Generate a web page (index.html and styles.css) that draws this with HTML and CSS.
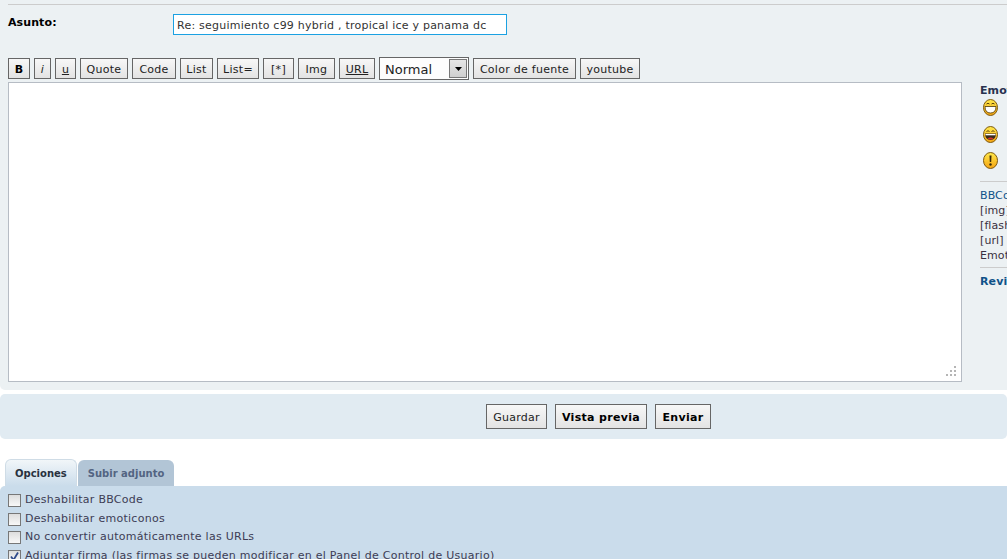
FILE: index.html
```html
<!DOCTYPE html>
<html lang="es">
<head>
<meta charset="utf-8">
<title>Responder</title>
<link rel="stylesheet" href="styles.css">
</head>
<body>
<div class="page">
  <section class="post-panel">
    <hr class="rule">
    <div class="subject-row">
      <label class="subject-label">Asunto:</label>
      <div class="subject-input">Re: seguimiento c99 hybrid , tropical ice y panama dc</div>
    </div>
    <div class="toolbar">
      <span class="btn btn-b">B</span>
      <span class="btn btn-i">i</span>
      <span class="btn btn-u">u</span>
      <span class="btn btn-quote">Quote</span>
      <span class="btn btn-code">Code</span>
      <span class="btn btn-list">List</span>
      <span class="btn btn-listeq">List=</span>
      <span class="btn btn-star">[*]</span>
      <span class="btn btn-img">Img</span>
      <span class="btn btn-url">URL</span>
      <span class="select"><span class="select-text">Normal</span><span class="select-arrow"><svg width="7" height="4" viewBox="0 0 7 4"><path d="M0 0h7L3.5 4z" fill="#000"/></svg></span></span>
      <span class="btn btn-color">Color de fuente</span>
      <span class="btn btn-yt">youtube</span>
    </div>
    <div class="editor-row">
      <div class="editor">
        <svg class="grip" width="11" height="11" viewBox="0 0 11 11"><path d="M8 0h2v2H8zM4 4h2v2H4zM8 4h2v2H8zM0 8h2v2H0zM4 8h2v2H4zM8 8h2v2H8z" fill="#b5b5b5"/></svg>
      </div>
      <aside class="side">
        <div class="side-title">Emoticonos</div>
        <div class="smilies">
          <svg class="smiley" width="17" height="17" viewBox="0 0 17 17"><defs><linearGradient id="face" x1="0" y1="0" x2="0" y2="1"><stop offset="0" stop-color="#ffe94a"/><stop offset="1" stop-color="#f5a412"/></linearGradient></defs><ellipse cx="8.500" cy="8.500" rx="7" ry="8" fill="url(#face)" stroke="#7d5a12"/><path d="M4.500 5q1.500-1.500 3 0M9.500 5q1.500-1.500 3 0" fill="none" stroke="#5c4208"/><path d="M3 7.500h11q0 6.500-5.500 6.500T3 7.500z" fill="#fff" stroke="#4a3608" stroke-width=".8"/></svg>
          <svg class="smiley" width="17" height="17" viewBox="0 0 17 17"><ellipse cx="8.500" cy="8.500" rx="7" ry="8" fill="url(#face)" stroke="#7d5a12"/><path d="M4.500 5.500q1.500-1.500 3 0M9.500 5.500q1.500-1.500 3 0" fill="none" stroke="#5c4208"/><path d="M3 7.500h11q0 6.500-5.500 6.500T3 7.500z" fill="#3a2a1a"/><path d="M3.500 8h10v1.300h-10z" fill="#fff"/><path d="M5.500 12.500q3-2 6 0q-3 2-6 0z" fill="#d8342a"/></svg>
          <svg class="smiley" width="17" height="17" viewBox="0 0 17 17"><ellipse cx="8.500" cy="8.500" rx="7" ry="8" fill="url(#face)" stroke="#7d5a12"/><path d="M7.500 3.500h2l-.3 6.500h-1.400z" fill="#3a2a08"/><circle cx="8.500" cy="12.500" r="1.200" fill="#3a2a08"/></svg>
        </div>
        <hr class="side-rule">
        <div class="side-link">BBCode</div>
        <div class="side-line">[img]</div>
        <div class="side-line">[flash]</div>
        <div class="side-line">[url]</div>
        <div class="side-line">Emot</div>
        <hr class="side-rule side-rule-2">
        <div class="side-review">Revi</div>
      </aside>
    </div>
  </section>
  <section class="actions">
    <span class="btn action action-save">Guardar</span>
    <span class="btn action action-preview strong">Vista previa</span>
    <span class="btn action action-send strong">Enviar</span>
  </section>
  <nav class="tabs">
    <span class="tab active">Opciones</span>
    <span class="tab">Subir adjunto</span>
  </nav>
  <section class="options">
    <div class="option"><span class="check"></span>Deshabilitar BBCode</div>
    <div class="option"><span class="check"></span>Deshabilitar emoticonos</div>
    <div class="option"><span class="check"></span>No convertir automáticamente las URLs</div>
    <div class="option"><span class="check"><svg width="11" height="11" viewBox="0 0 11 11"><path d="M2 5.500l2.500 3.500L9 1.500" fill="none" stroke="#2f4a8a" stroke-width="1.800"/></svg></span>Adjuntar firma (las firmas se pueden modificar en el Panel de Control de Usuario)</div>
  </section>
</div>
</body>
</html>
```
FILE: styles.css
```css
html, body {
  margin: 0;
  padding: 0;
  background: #fff;
}
.page {
  width: 1007px;
  height: 559px;
  overflow: hidden;
  font-family: "DejaVu Sans", Verdana, sans-serif;
  font-size: 11px;
  letter-spacing: 0.27px;
  color: #333;
}
.post-panel {
  height: 390px;
  box-sizing: border-box;
  background: #ecf1f3;
  padding: 4px 0 0 8px;
  border-radius: 0 0 0 5px;
}
.rule {
  margin: 0;
  border: 0;
  height: 1px;
  background: #ccc;
}
.subject-row {
  display: flex;
  margin-top: 9px;
  height: 21px;
  margin-bottom: 23px;
}
.subject-label {
  width: 165px;
  font-weight: bold;
  color: #000;
  padding-top: 2px;
  letter-spacing: 0.1px;
}
.subject-input {
  width: 334px;
  height: 21px;
  box-sizing: border-box;
  border: 1px solid #1ba1e2;
  background: #fff;
  padding: 0 3px;
  line-height: 21px;
  font-size: 11px;
  letter-spacing: 0.23px;
  color: #333;
}
.toolbar {
  display: flex;
  align-items: flex-start;
  gap: 4px;
  height: 24px;
}
.btn {
  display: flex;
  align-items: center;
  justify-content: center;
  box-sizing: border-box;
  height: 21px;
  padding-top: 1px;
  border: 1px solid #666;
  background: linear-gradient(#f7f7f7, #e3e3e3);
  color: #222;
  font-size: 11px;
  white-space: nowrap;
}
.btn-b { width: 22px; font-weight: bold; color: #000; }
.btn-i { width: 17px; font-style: italic; }
.btn-u { width: 21px; text-decoration: underline; }
.btn-quote { width: 48px; }
.btn-code { width: 44px; }
.btn-list { width: 33px; }
.btn-listeq { width: 42px; }
.btn-star { width: 31px; }
.btn-img { width: 37px; }
.btn-url { width: 36px; text-decoration: underline; }
.btn-color { width: 103px; }
.btn-yt { width: 60px; }
.select {
  display: flex;
  align-items: center;
  justify-content: space-between;
  box-sizing: border-box;
  width: 90px;
  height: 23px;
  margin-top: -1px;
  border: 1px solid #666;
  background: #fdfdfd;
  padding: 0 1px 0 5px;
  font-size: 13px;
  letter-spacing: 0;
  color: #222;
}
.select-text {
  padding-top: 1px;
}
.select-arrow {
  display: flex;
  align-items: center;
  justify-content: center;
  box-sizing: border-box;
  width: 18px;
  height: 19px;
  border: 1px solid #777;
  background: linear-gradient(#e6e6e6, #cfcfcf);
}
.editor-row {
  display: flex;
}
.editor {
  position: relative;
  width: 954px;
  height: 300px;
  box-sizing: border-box;
  background: #fff;
  border: 1px solid #b6bcc4;
  flex: none;
}
.grip {
  position: absolute;
  right: 4px;
  bottom: 4px;
}
.side {
  flex: none;
  width: 27px;
  overflow: hidden;
  margin-left: 18px;
  white-space: nowrap;
  color: #333;
  letter-spacing: 0.1px;
}
.side-title {
  font-weight: bold;
  color: #28324f;
  line-height: 13px;
  margin-top: 2px;
}
.smilies {
  display: flex;
  flex-direction: column;
  gap: 9.500px;
  margin-top: 2px;
  padding-left: 2px;
}
.smiley {
  display: block;
}
.side-rule {
  margin: 12px 0 6px;
  border: 0;
  height: 1px;
  background: #ccc;
}
.side-rule-2 {
  margin: 4px 0 6px;
}
.side-link {
  color: #105289;
  line-height: 15px;
}
.side-line {
  line-height: 15px;
  color: #3a3040;
}
.side-review {
  font-weight: bold;
  color: #105289;
  line-height: 15px;
}
.actions {
  margin-top: 4px;
  height: 45px;
  background: #e1ebf2;
  border-radius: 5px;
  display: flex;
  justify-content: center;
  align-items: center;
  gap: 8px;
  padding-left: 190px;
  box-sizing: border-box;
}
.action {
  height: 25px;
  font-size: 11px;
}
.action-save { width: 61px; }
.action-preview { width: 92px; }
.action-send { width: 56px; }
.action.strong {
  font-weight: bold;
  color: #000;
  letter-spacing: 0.33px;
}
.tabs {
  display: flex;
  gap: 1px;
  margin-top: 20px;
  height: 27px;
  padding-left: 5px;
  align-items: flex-end;
  letter-spacing: 0;
}
.tab {
  display: block;
  box-sizing: border-box;
  height: 26px;
  padding: 0 10px;
  line-height: 27px;
  font-size: 10px;
  font-weight: bold;
  color: #536482;
  background: #b2c5d6;
  border-radius: 6px 6px 0 0;
}
.tab.active {
  height: 27px;
  color: #28313f;
  background: linear-gradient(#f1f6f9, #cadceb);
  border: 1px solid #cfdce6;
  border-bottom: 0;
  padding: 0 9px;
}
.options {
  background: #cadceb;
  height: 73px;
  padding: 4.400px 0 0 8px;
  border-radius: 5px 0 0 0;
  box-sizing: border-box;
}
.option {
  display: flex;
  align-items: center;
  height: 18.500px;
  color: #3d3d55;
  white-space: nowrap;
}
.check {
  display: block;
  box-sizing: border-box;
  width: 13px;
  height: 13px;
  margin-right: 4px;
  margin-top: 2px;
  border: 1px solid #777;
  background: linear-gradient(#ddd, #f8f8f8);
  flex: none;
}
.check svg {
  display: block;
}
```
